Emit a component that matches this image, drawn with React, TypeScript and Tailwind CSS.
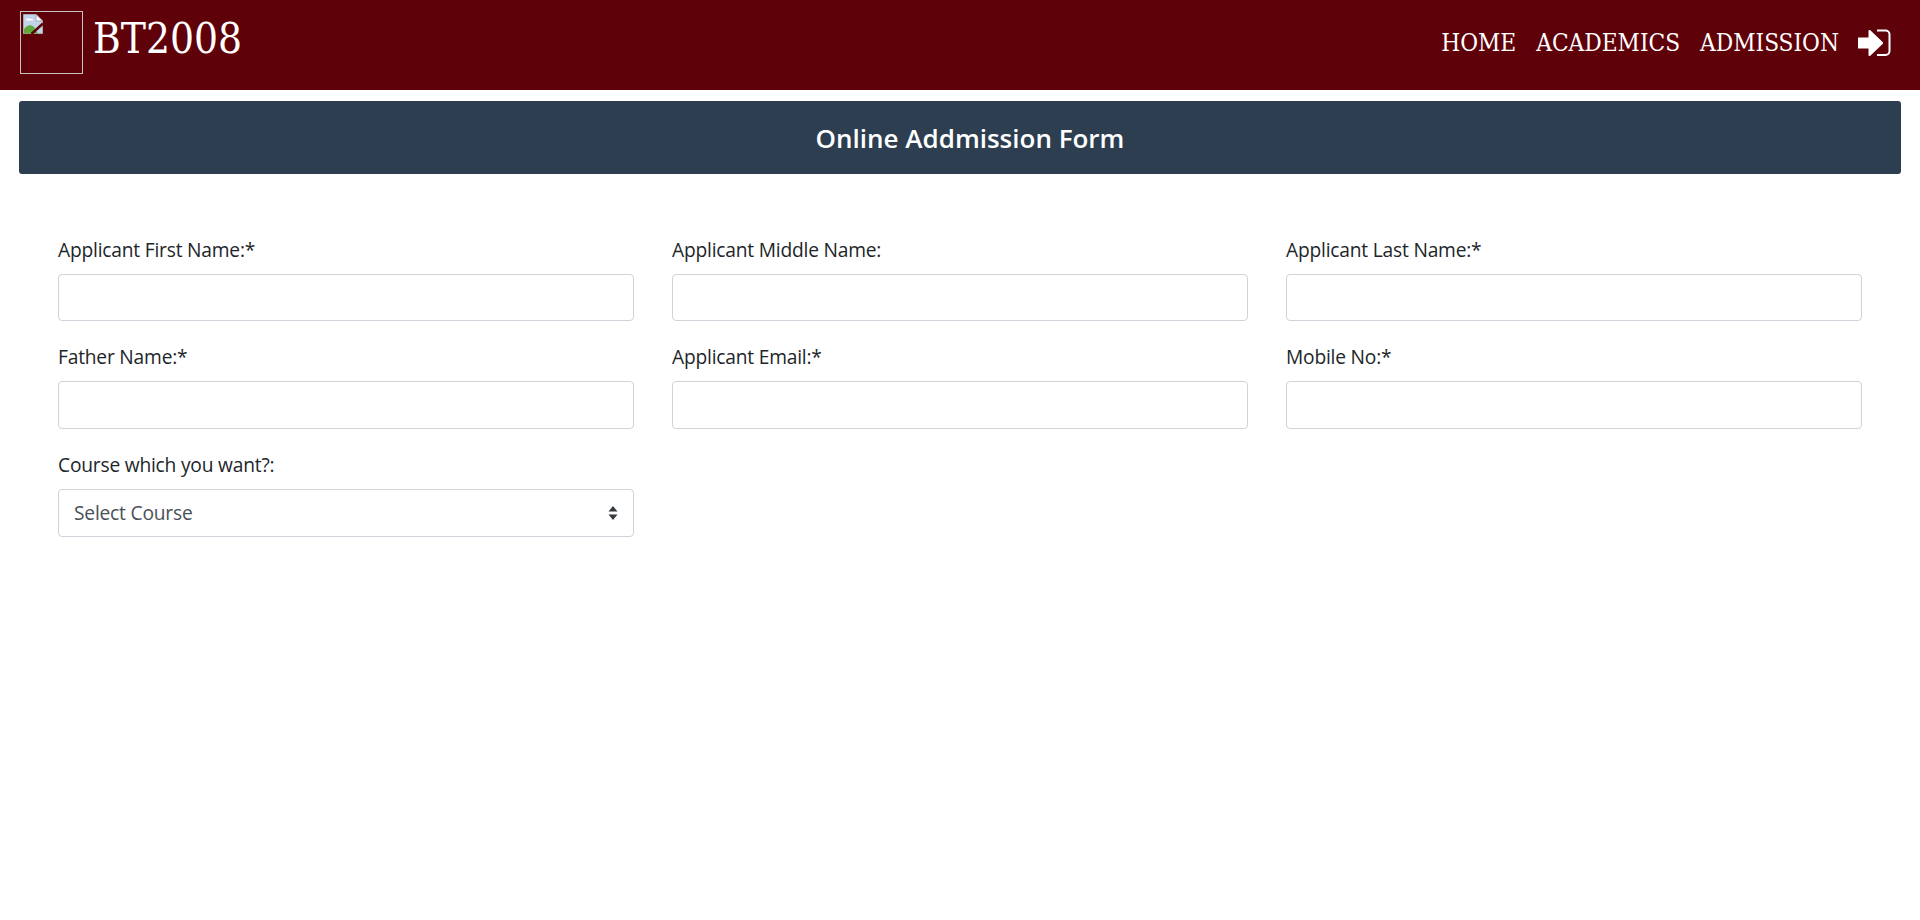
function Field({ label }: { label: string }) {
  return (
    <div className="flex flex-col">
      <label className="mb-[9px] text-[19.2px] leading-[28.8px] tracking-[-0.2px] text-[#212529]">{label}</label>
      <input className="h-[47.6px] w-full rounded-[4px] border border-[#ced4da] bg-white" />
    </div>
  );
}

function BrokenImage() {
  return (
    <svg width="20" height="20" viewBox="0 0 20 20" className="ml-[2px] mt-[2px] block">
      <path d="M.5.5H13L19.5 7V19.500H.5z" fill="#c3d3ea" stroke="#a9a9a9" />
      <path d="M13 .5V7H19.500z" fill="#fff" stroke="#a9a9a9" />
      <path d="M3 6c.5-2 3-2.500 4-1 2-.5 3.500.5 3 1.500H3z" fill="#fff" />
      <path d="M1 19.500V15c3-4 7-5 10-2l4 6.500z" fill="#5fa83c" />
      <path d="M8.500 20 20 9.500" fill="none" stroke="#5f0109" strokeWidth="2.500" />
    </svg>
  );
}

function SignIn() {
  return (
    <svg width="33" height="28" viewBox="0 0 33 28" fill="#fff">
      <path d="M0 8.500h10.500V2c0-1 1-1.400 1.800-.8L24.600 13a1.300 1.300 0 0 1 0 2L12.300 26.800c-.8.6-1.800.2-1.800-.8v-6.500H0z" />
      <path d="M19 .5h8.500a5 5 0 0 1 5 5v16.500a5 5 0 0 1-5 5H19V25h8.500a3 3 0 0 0 3-3V5.500a3 3 0 0 0-3-3H19z" />
    </svg>
  );
}

export default function App() {
  return (
    <div className="min-h-[920px] bg-white font-['Open_Sans','Noto_Sans',sans-serif]">
      <header className="flex h-[90px] items-start justify-between bg-[#5f0109] pl-5 pr-[29px]">
        <div className="flex items-start gap-[10px] pt-[11px]">
          <div className="h-[63px] w-[63px] border border-[#c4c4c4]">
            <BrokenImage />
          </div>
          <span className="pt-[3px] font-['DejaVu_Serif_Condensed','DejaVu_Serif',serif] text-[42px] leading-[50px] text-white">BT2008</span>
        </div>
        <nav className="flex items-center gap-5 pt-[29px] font-['DejaVu_Serif_Condensed','DejaVu_Serif',serif] text-[24.200px] leading-[28px] text-white">
          <span>HOME</span>
          <span>ACADEMICS</span>
          <span className="-mr-[1px]">ADMISSION</span>
          <SignIn />
        </nav>
      </header>
      <div className="px-[19px] pt-[11px]">
        <div className="flex h-[73px] items-center justify-center rounded-[3px] bg-[#2c3e50] pl-5 pt-[1px] text-[26px] font-semibold text-white">
          Online Addmission Form
        </div>
        <div className="grid grid-cols-3 gap-x-[38px] gap-y-[22px] px-[39px] pt-[62px]">
          <Field label="Applicant First Name:*" />
          <Field label="Applicant Middle Name:" />
          <Field label="Applicant Last Name:*" />
          <Field label="Father Name:*" />
          <Field label="Applicant Email:*" />
          <Field label="Mobile No:*" />
          <div className="flex flex-col">
            <label className="mb-[9px] text-[19.2px] leading-[28.8px] tracking-[-0.2px] text-[#212529]">Course which you want?:</label>
            <div className="flex h-[48px] items-center justify-between rounded-[4px] border border-[#ced4da] px-[15px] text-[19.2px] tracking-[-0.2px] text-[#495057]">
              <span className="pt-[2px]">Select Course</span>
              <svg width="10" height="16" viewBox="0 0 10 16"><path d="M5 1 9.500 6.500H.5zM5 15 .5 9.500h9z" fill="#343a40" /></svg>
            </div>
          </div>
        </div>
      </div>
    </div>
  );
}
